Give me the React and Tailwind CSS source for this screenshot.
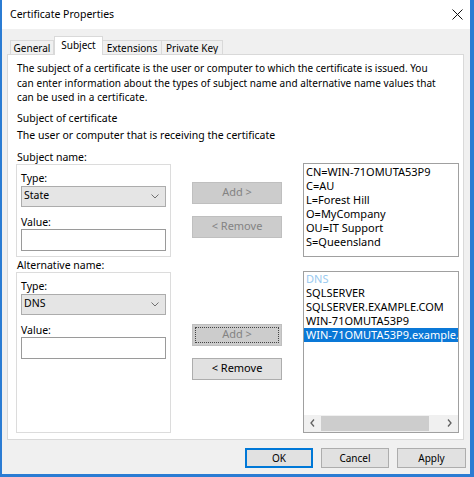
function Chevron() {
  return (
    <svg width="8" height="5" viewBox="0 0 8 5" className="shrink-0">
      <path d="M0.5 0.5L4 4L7.5 0.5" fill="none" stroke="#707070" strokeWidth="1" />
    </svg>
  );
}

function Select({ value }) {
  return (
    <div className="h-[21px] flex items-center justify-between bg-[#e5e5e5] border border-[#acacac] pl-[2px] pr-[6px] text-[10.5px]">
      <span>{value}</span>
      <Chevron />
    </div>
  );
}

function Input() {
  return <div className="h-[22px] bg-white border border-[#9a9a9a]" />;
}

function GroupBox({ selectValue, height }) {
  return (
    <div className={`w-[155px] ${height} shrink-0 border border-[#dcdcdc] bg-white px-[4px] pt-[6px] flex flex-col text-[10.5px]`}>
      <div className="leading-[14px]">Type:</div>
      <div className="mt-[1px]">
        <Select value={selectValue} />
      </div>
      <div className="leading-[14px] mt-[8px]">Value:</div>
      <Input />
    </div>
  );
}

function DisabledButton({ children, focused }) {
  return (
    <div className="h-[22px] w-[90px] bg-[#cccccc] border border-[#bfbfbf] text-[#838383] text-[11px] flex items-center justify-center p-[2px]">
      <div className={`w-full h-full flex items-center justify-center ${focused ? "border border-dotted border-[#444]" : ""}`}>
        {children}
      </div>
    </div>
  );
}

function EnabledButton({ children }) {
  return (
    <div className="h-[22px] w-[90px] bg-[#e1e1e1] border border-[#adadad] text-[11px] flex items-center justify-center">
      {children}
    </div>
  );
}

function Tab({ children, selected, w }) {
  if (selected) {
    return (
      <div className={`${w} h-[19px] -mb-px bg-white border border-b-0 border-[#d9d9d9] flex items-start justify-center pt-[1px] leading-[14px] relative z-10`}>
        {children}
      </div>
    );
  }
  return (
    <div className={`${w} h-[14px] bg-[#f0f0f0] border border-b-0 border-[#d9d9d9] -ml-px first:ml-0 flex items-center justify-center leading-[12px]`}>
      {children}
    </div>
  );
}

export default function App() {
  return (
    <div className="w-[474px] h-[477px] bg-white font-['Noto_Sans',sans-serif] text-[10px] text-black overflow-hidden">
      <div className="flex flex-col h-full border-l-2 border-r-4 border-b-[3px] border-[#2b7cd3]">
        {/* Title bar */}
        <div className="h-[29px] shrink-0 bg-white flex items-center justify-between pl-[8px] pr-[7px]">
          <span className="text-[10.5px]">Certificate Properties</span>
          <svg width="11" height="11" viewBox="0 0 11 11">
            <path d="M0.5 0.5L10.5 10.5M10.5 0.5L0.5 10.5" stroke="#111" strokeWidth="1" />
          </svg>
        </div>

        {/* Body */}
        <div className="flex-1 bg-[#f0f0f0] flex flex-col pl-[5px] pr-[6px] pt-[7px]">
          {/* Tabs */}
          <div className="flex items-end h-[18px] pl-[3px]">
            <Tab w="w-[44px]">General</Tab>
            <Tab w="w-[49px]" selected>Subject</Tab>
            <Tab w="w-[60px]">Extensions</Tab>
            <Tab w="w-[62px]">Private Key</Tab>
          </div>

          {/* Panel */}
          <div className="h-[386px] shrink-0 bg-white border border-[#d9d9d9] pl-[8px] pt-[6px] flex flex-col">
            <div className="leading-[14.5px] pl-px">
              <div className="whitespace-nowrap">The subject of a certificate is the user or computer to which the certificate is issued. You</div>
              <div className="whitespace-nowrap tracking-[0.06px]">can enter information about the types of subject name and alternative name values that</div>
              <div className="whitespace-nowrap tracking-[0.1px]">can be used in a certificate.</div>
            </div>
            <div className="leading-[14.5px] mt-[6px] pl-px text-[10.5px]">Subject of certificate</div>
            <div className="leading-[14.5px] mt-[3px] pl-px text-[10.5px]">The user or computer that is receiving the certificate</div>
            <div className="leading-[14px] mt-[7px] pl-px text-[10.5px]">Subject name:</div>

            {/* Row 1 */}
            <div className="flex items-start">
              <GroupBox selectValue="State" height="h-[93px]" />
              <div className="ml-[21px] pt-[18px] flex flex-col gap-[12px]">
                <DisabledButton>Add &gt;</DisabledButton>
                <DisabledButton>&lt; Remove</DisabledButton>
              </div>
              <div className="ml-[21px] -mt-px w-[156px] h-[94px] border border-[#a0a0a0] bg-white pt-[1px] pl-[2px] leading-[14px] text-[11px] whitespace-nowrap overflow-hidden">
                <div>CN=WIN-71OMUTA53P9</div>
                <div>C=AU</div>
                <div>L=Forest Hill</div>
                <div>O=MyCompany</div>
                <div>OU=IT Support</div>
                <div>S=Queensland</div>
              </div>
            </div>

            <div className="leading-[13px] mt-[2px] pl-px text-[10.5px]">Alternative name:</div>

            {/* Row 2 */}
            <div className="flex items-start">
              <GroupBox selectValue="DNS" height="h-[161px]" />
              <div className="ml-[21px] pt-[52px] flex flex-col gap-[12px]">
                <DisabledButton focused>Add &gt;</DisabledButton>
                <EnabledButton>&lt; Remove</EnabledButton>
              </div>
              <div className="ml-[21px] -mt-px w-[156px] h-[162px] border border-[#a0a0a0] bg-white flex flex-col">
                <div className="flex-1 leading-[14px] text-[11px] whitespace-nowrap overflow-hidden">
                  <div className="pl-[2px] text-[#99c9ef]">DNS</div>
                  <div className="pl-[2px]">SQLSERVER</div>
                  <div className="pl-[2px]">SQLSERVER.EXAMPLE.COM</div>
                  <div className="pl-[2px]">WIN-71OMUTA53P9</div>
                  <div className="pl-[2px] bg-[#0a78d7] text-white">WIN-71OMUTA53P9.example.com</div>
                </div>
                <div className="h-[17px] shrink-0 flex bg-[#f0f0f0]">
                  <div className="w-[17px] flex items-center justify-center">
                    <svg width="5" height="8" viewBox="0 0 5 8"><path d="M4 0.5L1 4L4 7.5" fill="none" stroke="#606060" strokeWidth="1.3" /></svg>
                  </div>
                  <div className="w-[108px] bg-[#cdcdcd] my-[1px]" />
                  <div className="flex-1" />
                  <div className="w-[17px] flex items-center justify-center">
                    <svg width="5" height="8" viewBox="0 0 5 8"><path d="M1 0.5L4 4L1 7.5" fill="none" stroke="#606060" strokeWidth="1.3" /></svg>
                  </div>
                </div>
              </div>
            </div>
          </div>

          {/* Bottom buttons */}
          <div className="flex justify-end gap-[8px] mt-[8px] -mr-[2px]">
            <div className="w-[68px] h-[20px] bg-[#e1e1e1] border-2 border-[#0078d7] flex items-center justify-center">OK</div>
            <div className="w-[68px] h-[20px] bg-[#e1e1e1] border border-[#adadad] flex items-center justify-center">Cancel</div>
            <div className="w-[69px] h-[20px] bg-[#e1e1e1] border border-[#adadad] flex items-center justify-center">Apply</div>
          </div>
        </div>
      </div>
    </div>
  );
}
